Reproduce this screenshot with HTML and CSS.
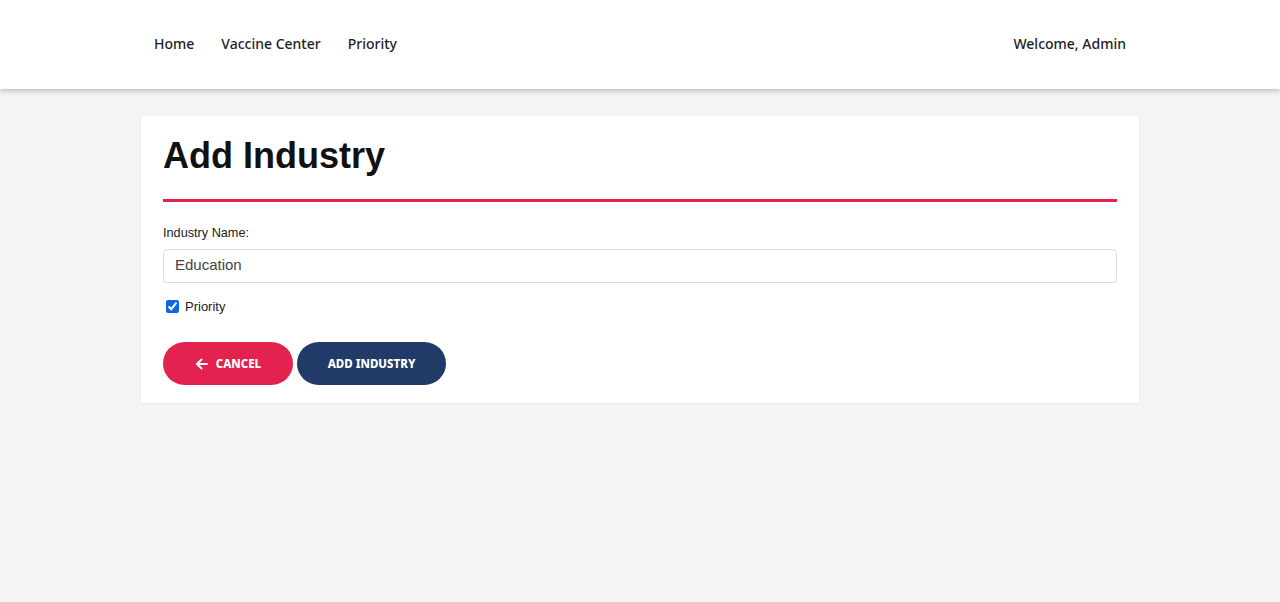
FILE: index.html
```html
<!DOCTYPE html>
<html>
<head>
<meta charset="utf-8">
<link rel="stylesheet" href="styles.css">
</head>
<body>
<header class="topbar">
  <div class="topbar-inner">
    <nav class="nav">
      <a class="nav-link" href="#">Home</a>
      <a class="nav-link" href="#">Vaccine Center</a>
      <a class="nav-link" href="#">Priority</a>
    </nav>
    <div class="welcome">Welcome, Admin</div>
  </div>
</header>
<main class="main">
  <section class="card">
    <h1 class="title">Add Industry</h1>
    <div class="divider"></div>
    <form class="form">
      <label class="label" for="name">Industry Name:</label>
      <input class="input" id="name" type="text" value="Education">
      <label class="check">
        <input type="checkbox" class="checkbox" checked>
        <span>Priority</span>
      </label>
      <div class="actions">
        <button type="button" class="btn btn-cancel">
          <svg class="arrow" width="13" height="12" viewBox="0 0 13 12"><path d="M12 6H2M6.5 1.5L2 6l4.5 4.5" fill="none" stroke="#fff" stroke-width="2" stroke-linecap="round" stroke-linejoin="round"/></svg>
          CANCEL
        </button>
        <button type="button" class="btn btn-add">ADD INDUSTRY</button>
      </div>
    </form>
  </section>
</main>
</body>
</html>
```
FILE: styles.css
```css
* { box-sizing: border-box; }
html, body { margin: 0; padding: 0; }
body {
  background: #f4f4f4;
  font-family: "Liberation Sans", Arial, sans-serif;
  height: 602px;
  overflow: hidden;
}
.topbar {
  background: #fff;
  height: 89px;
  box-shadow: 0 2px 5px rgba(0,0,0,0.22);
  position: relative;
  z-index: 1;
}
.topbar-inner {
  width: 972px;
  margin: 0 auto;
  height: 100%;
  display: flex;
  align-items: center;
  justify-content: space-between;
  padding-bottom: 2px;
}
.nav { display: flex; gap: 27px; }
.nav-link, .welcome {
  font-family: "Noto Sans", "Open Sans", sans-serif;
  font-size: 14px;
  color: #1e1e1e;
  text-decoration: none;
  font-weight: 500;
}
.main {
  padding-top: 27px;
}
.card {
  width: 998px;
  margin: 0 auto;
  background: #fff;
  border-radius: 3px;
  box-shadow: 0 1px 2px rgba(0,0,0,0.05);
  padding: 18px 22px 18px 22px;
}
.title {
  margin: 0;
  font-size: 36px;
  font-weight: bold;
  color: #111;
  line-height: 43px;
}
.divider {
  height: 3px;
  background: #e3224f;
  margin-top: 22px;
}
.form { display: flex; flex-direction: column; }
.label {
  font-size: 12.7px;
  color: #222;
  margin-top: 23px;
  line-height: 16px;
}
.input {
  margin-top: 8px;
  height: 34px;
  border: 1px solid #dcdcdc;
  border-radius: 4px;
  padding: 0 11px 3px;
  font-family: "Liberation Sans", Arial, sans-serif;
  font-size: 15px;
  color: #444;
  outline: none;
}
.check {
  margin-top: 16px;
  display: flex;
  align-items: center;
  gap: 6px;
  font-size: 13px;
  color: #222;
  padding-left: 3px;
}
.checkbox {
  margin: 0;
  width: 13px;
  height: 13px;
  accent-color: #0a66e4;
}
.actions {
  margin-top: 28px;
  display: flex;
  gap: 4px;
}
.btn {
  height: 43px;
  border: none;
  border-radius: 22px;
  color: #fff;
  font-family: "Noto Sans", "Open Sans", sans-serif;
  font-weight: 800;
  font-size: 11.5px;
  letter-spacing: 0;
  display: flex;
  align-items: center;
  justify-content: center;
  gap: 8px;
  cursor: pointer;
}
.btn-cancel { width: 130px; background: #e3224f; }
.btn-add { width: 149px; background: #213a68; }
.arrow { display: block; }
```
